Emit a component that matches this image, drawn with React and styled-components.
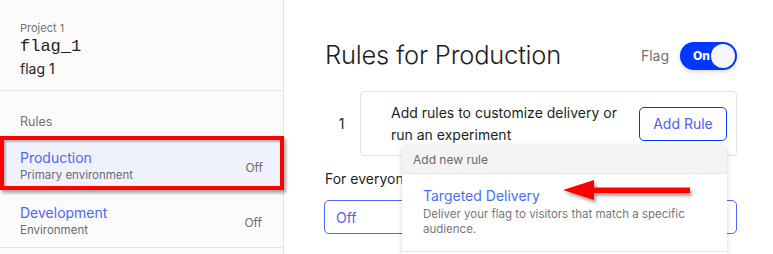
import React from "react";
import styled, { createGlobalStyle } from "styled-components";

const GlobalStyle = createGlobalStyle`
  html, body {
    margin: 0;
    padding: 0;
    background: #fff;
    overflow: hidden;
  }
  body {
    font-family: Inter, "Noto Sans", sans-serif;
    color: #1f1f1f;
  }
`;

const Page = styled.div`
  position: relative;
  display: flex;
  width: 773px;
  height: 254px;
  overflow: hidden;
`;

/* 왼쪽 사이드바 */
const Sidebar = styled.aside`
  width: 283px;
  flex: none;
  background: #fbfbfb;
  border-right: 1px solid #e4e4e4;
`;

const SideHeader = styled.div`
  padding: 20px 20px 10px;
  border-bottom: 1px solid #e4e4e4;
`;

const ProjectName = styled.div`
  font-size: 11px;
  line-height: 16px;
  color: #747474;
`;

const FlagKey = styled.div`
  font-family: "Liberation Mono", "DejaVu Sans Mono", monospace;
  font-size: 17px;
  line-height: 22px;
  color: #1e1e1e;
`;

const FlagName = styled.div`
  font-size: 14px;
  line-height: 22px;
  color: #1e1e1e;
`;

const SectionLabel = styled.div`
  padding: 22px 20px 5px;
  font-size: 12.5px;
  line-height: 18px;
  color: #747474;
`;

const EnvList = styled.div`
  border-bottom: 1px solid #e4e4e4;
`;

const EnvRow = styled.div`
  display: flex;
  align-items: center;
  justify-content: space-between;
  padding: ${(p) => (p.selected ? "9px 17px 3px 16px" : "14px 21px 9px 20px")};
  background: ${(p) => (p.selected ? "#eff2fc" : "transparent")};
  border: ${(p) => (p.selected ? "4px solid #ff0000" : "none")};
  box-shadow: ${(p) =>
    p.selected ? "2px 3px 3px rgba(0,0,0,0.35), inset 2px 2px 2px rgba(0,0,0,0.25)" : "none"};
  margin-right: ${(p) => (p.selected ? "-1px" : "0")};
`;

const EnvTitle = styled.div`
  font-size: 14px;
  line-height: 18px;
  color: #5266f2;
`;

const EnvSub = styled.div`
  font-size: 11.5px;
  line-height: 16px;
  color: #6c6c6c;
`;

const EnvStatus = styled.div`
  font-size: 12px;
  color: #6c6c6c;
  margin-top: 2px;
`;

/* 메인 영역 */
const Main = styled.main`
  flex: 1;
  padding: 36px 36px 0 41px;
`;

const TitleRow = styled.div`
  display: flex;
  align-items: center;
  justify-content: space-between;
  height: 36px;
`;

const Title = styled.h1`
  margin: 0;
  font-size: 25.5px;
  font-weight: 300;
  color: #1e1e1e;
  letter-spacing: -0.2px;
`;

const FlagToggle = styled.div`
  display: flex;
  align-items: center;
  gap: 11px;
  margin-top: 3px;
  font-size: 14px;
  color: #707070;
`;

const Switch = styled.div`
  display: flex;
  align-items: center;
  justify-content: space-between;
  width: 57px;
  height: 28px;
  box-sizing: border-box;
  padding: 0 2px 0 13px;
  border-radius: 14px;
  background: #0037ff;
  color: #fff;
  font-size: 12px;
  font-weight: 800;
  box-shadow: 0 2px 4px rgba(0, 0, 0, 0.15);
`;

const Knob = styled.span`
  width: 24px;
  height: 24px;
  border-radius: 50%;
  background: #f6f6f8;
`;

const RuleRow = styled.div`
  display: flex;
  align-items: center;
  margin-top: 19px;
`;

const RuleIndex = styled.div`
  width: 35px;
  font-size: 14px;
  text-align: center;
  padding-right: 2px;
  box-sizing: border-box;
`;

const RuleCard = styled.div`
  position: relative;
  flex: 1;
  display: flex;
  align-items: center;
  justify-content: space-between;
  height: 65px;
  box-sizing: border-box;
  padding: 0 9px 0 30px;
  border: 1px solid #e2e2e2;
  border-radius: 4px;
`;

const RuleText = styled.div`
  font-size: 14px;
  line-height: 22px;
  color: #1e1e1e;
`;

const OutlineButton = styled.button`
  height: 34px;
  width: 88px;
  border: 1px solid #0037ff;
  border-radius: 5px;
  background: #fff;
  font-family: inherit;
  font-size: 14px;
  color: #5060f2;
`;

const Everyone = styled.div`
  margin-top: 14px;
  font-size: 14px;
  line-height: 18px;
`;

const SelectBox = styled.div`
  margin: 12px 0 0 -1px;
  height: 34px;
  box-sizing: border-box;
  display: flex;
  align-items: center;
  padding-left: 11px;
  border: 1px solid #4c66f5;
  border-radius: 5px;
  font-size: 14px;
  color: #5a5af0;
`;

/* 드롭다운 (Add Rule 아래) */
const Dropdown = styled.div`
  position: absolute;
  top: 53px;
  right: 9px;
  width: 325px;
  height: 120px;
  background: #fff;
  border-radius: 4px;
  box-shadow: 0 1px 5px rgba(0, 0, 0, 0.18);
  z-index: 10;
`;

const DropHeader = styled.div`
  height: 28px;
  display: flex;
  align-items: center;
  padding: 0 11px;
  background: #f3f3f3;
  border-bottom: 1px solid #e8e8e8;
  border-radius: 4px 4px 0 0;
  font-size: 12px;
  color: #6a6a6a;
`;

const DropItem = styled.div`
  padding: 13px 20px 14px 21px;
  border-bottom: 1px solid #e8e8e8;
`;

const DropTitle = styled.div`
  font-size: 14px;
  line-height: 18px;
  color: #4c6ef5;
`;

const DropDesc = styled.div`
  margin-top: 2px;
  font-size: 11.5px;
  line-height: 15px;
  color: #777;
`;

const Arrow = styled.svg`
  position: absolute;
  left: 560px;
  top: 178px;
  z-index: 20;
`;

export default function App() {
  return (
    <>
      <GlobalStyle />
      <Page>
        <Sidebar>
          <SideHeader>
            <ProjectName>Project 1</ProjectName>
            <FlagKey>flag_1</FlagKey>
            <FlagName>flag 1</FlagName>
          </SideHeader>
          <SectionLabel>Rules</SectionLabel>
          <EnvList>
            <EnvRow selected>
              <div>
                <EnvTitle>Production</EnvTitle>
                <EnvSub>Primary environment</EnvSub>
              </div>
              <EnvStatus>Off</EnvStatus>
            </EnvRow>
            <EnvRow>
              <div>
                <EnvTitle>Development</EnvTitle>
                <EnvSub>Environment</EnvSub>
              </div>
              <EnvStatus>Off</EnvStatus>
            </EnvRow>
          </EnvList>
        </Sidebar>

        <Main>
          <TitleRow>
            <Title>Rules for Production</Title>
            <FlagToggle>
              Flag
              <Switch>
                On
                <Knob />
              </Switch>
            </FlagToggle>
          </TitleRow>

          <RuleRow>
            <RuleIndex>1</RuleIndex>
            <RuleCard>
              <RuleText>
                Add rules to customize delivery or
                <br />
                run an experiment
              </RuleText>
              <OutlineButton>Add Rule</OutlineButton>
              <Dropdown>
                <DropHeader>Add new rule</DropHeader>
                <DropItem>
                  <DropTitle>Targeted Delivery</DropTitle>
                  <DropDesc>
                    Deliver your flag to visitors that match a specific
                    <br />
                    audience.
                  </DropDesc>
                </DropItem>
              </Dropdown>
            </RuleCard>
          </RuleRow>

          <Everyone>For everyone</Everyone>
          <SelectBox>Off</SelectBox>
        </Main>

        {/* 빨간 화살표 주석 */}
        <Arrow width="140" height="30" viewBox="0 0 140 30">
          <defs>
            <filter id="shadow" x="-10%" y="-30%" width="130%" height="170%">
              <feDropShadow dx="2" dy="3" stdDeviation="1.5" floodColor="#000" floodOpacity="0.35" />
            </filter>
          </defs>
          <path
            d="M3 12 L34 2 L34 9.5 L130 9.5 L130 15 L34 15 L34 22 Z"
            fill="#ff0000"
            filter="url(#shadow)"
          />
        </Arrow>
      </Page>
    </>
  );
}
